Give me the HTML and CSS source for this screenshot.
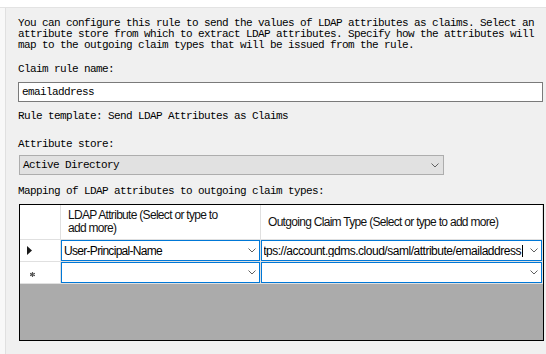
FILE: index.html
```html
<!DOCTYPE html>
<html>
<head>
<meta charset="utf-8">
<link rel="stylesheet" href="styles.css">
</head>
<body>
<div class="top"></div>
<div class="frame">
  <div class="side"></div>
  <div class="content">
    <p class="desc">You can configure this rule to send the values of LDAP attributes as claims. Select an<br>attribute store from which to extract LDAP attributes. Specify how the attributes will<br>map to the outgoing claim types that will be issued from the rule.</p>
    <p class="lbl lbl-name">Claim rule name:</p>
    <div class="textbox">emailaddress</div>
    <p class="lbl lbl-template">Rule template: Send LDAP Attributes as Claims</p>
    <p class="lbl lbl-store">Attribute store:</p>
    <div class="combo">
      <span>Active Directory</span>
      <svg class="chev" width="8" height="5" viewBox="0 0 8 5"><path d="M0.5 0.5 L4 4 L7.5 0.5" fill="none" stroke="#606060" stroke-width="1"/></svg>
    </div>
    <p class="lbl lbl-map">Mapping of LDAP attributes to outgoing claim types:</p>
    <div class="grid">
      <div class="row head">
        <div class="rh"></div>
        <div class="c1 hc">LDAP Attribute (Select or type to<br>add more)</div>
        <div class="c2 hc">Outgoing Claim Type (Select or type to add more)</div>
      </div>
      <div class="row data">
        <div class="rh"><svg width="5" height="9" viewBox="0 0 5 9"><path d="M0 0 L5 4.5 L0 9 Z" fill="#1a1a1a"/></svg></div>
        <div class="c1">
          <div class="cc">
            <span class="val">User-Principal-Name</span>
            <svg class="chev" width="8" height="5" viewBox="0 0 8 5"><path d="M0.5 0.5 L4 4 L7.5 0.5" fill="none" stroke="#606060" stroke-width="1"/></svg>
          </div>
        </div>
        <div class="c2">
          <div class="cc">
            <span class="clip"><span class="val edit">https://account.gdms.cloud/saml/attribute/emailaddress</span></span>
            <svg class="chev" width="8" height="5" viewBox="0 0 8 5"><path d="M0.5 0.5 L4 4 L7.5 0.5" fill="none" stroke="#606060" stroke-width="1"/></svg>
          </div>
        </div>
      </div>
      <div class="row data">
        <div class="rh newrow"><svg width="5" height="5" viewBox="0 0 5 5"><path d="M2.5 0 V5 M0 1.2 L5 3.8 M0 3.8 L5 1.2" fill="none" stroke="#555" stroke-width="1.2"/></svg></div>
        <div class="c1">
          <div class="cc">
            <span class="val"></span>
            <svg class="chev" width="8" height="5" viewBox="0 0 8 5"><path d="M0.5 0.5 L4 4 L7.5 0.5" fill="none" stroke="#606060" stroke-width="1"/></svg>
          </div>
        </div>
        <div class="c2">
          <div class="cc">
            <span class="val"></span>
            <svg class="chev" width="8" height="5" viewBox="0 0 8 5"><path d="M0.5 0.5 L4 4 L7.5 0.5" fill="none" stroke="#606060" stroke-width="1"/></svg>
          </div>
        </div>
      </div>
      <div class="empty"></div>
    </div>
  </div>
</div>
</body>
</html>
```
FILE: styles.css
```css
* { box-sizing: border-box; }
html, body { margin: 0; padding: 0; }
body {
  width: 546px;
  height: 354px;
  overflow: hidden;
  background: #f0f0f0;
  font-family: "Liberation Mono", monospace;
  font-size: 11px;
  letter-spacing: -0.6px;
  color: #000;
}
.top {
  height: 8px;
  background: #fff;
  border-bottom: 1px solid #e3e3e3;
}
.frame {
  display: flex;
  height: 346px;
}
.side {
  width: 6px;
  background: #f8f8f8;
  border-right: 1px solid #e0e0e0;
}
.content {
  flex: 1;
  padding: 10px 0 0 12px;
  display: flex;
  flex-direction: column;
  align-items: flex-start;
}
.desc, .lbl {
  margin: 0;
  line-height: 11px;
  white-space: nowrap;
}
.lbl-name { margin-top: 13px; }
.lbl-template { margin-top: 9px; }
.lbl-store { margin-top: 17px; }
.lbl-map { margin-top: 11px; }
.textbox {
  margin-top: 7px;
  width: 525px;
  height: 20px;
  border: 1px solid #7a7a7a;
  background: #fff;
  padding-left: 3px;
  line-height: 18px;
}
.combo {
  margin-top: 5px;
  margin-left: 1px;
  width: 425px;
  height: 20px;
  border: 1px solid #adadad;
  background: #e1e1e1;
  padding: 0 4px 0 3px;
  display: flex;
  align-items: center;
  justify-content: space-between;
}
.chev { display: block; flex: none; }
.grid {
  margin-top: 7px;
  margin-left: 1px;
  width: 525px;
  height: 137px;
  border: 1px solid #000;
  display: flex;
  flex-direction: column;
  font-family: "Liberation Sans", Arial, sans-serif;
  font-size: 12px;
  letter-spacing: -0.7px;
}
.row {
  display: flex;
  background: #fff;
}
.head { height: 35px; }
.data { height: 22px; }
.rh {
  width: 41px;
  border-right: 1px solid #e0e0e0;
  border-bottom: 1px solid #e0e0e0;
  display: flex;
  align-items: center;
  padding-left: 7px;
}
.rh svg { display: block; }
.newrow { padding-left: 10px; padding-top: 3px; }
.c1 {
  width: 200px;
  border-right: 1px solid #e0e0e0;
  border-bottom: 1px solid #e0e0e0;
}
.c2 {
  width: 282px;
  border-right: 1px solid #e0e0e0;
  border-bottom: 1px solid #e0e0e0;
}
.hc {
  display: flex;
  align-items: center;
  padding-left: 7px;
  line-height: 13px;
  color: #111;
}
.cc {
  height: 21px;
  border: 1px solid #0078d7;
  background: #fff;
  display: flex;
  align-items: center;
  justify-content: space-between;
  padding: 0 3px 0 2px;
  white-space: nowrap;
}
.clip {
  flex: 1;
  display: flex;
  justify-content: flex-end;
  overflow: hidden;
  margin-right: 7px;
}
.edit {
  flex: none;
  border-right: 1px solid #000;
  padding-right: 1px;
  line-height: 12px;
  letter-spacing: -0.48px;
}
.empty {
  flex: 1;
  background: #ababab;
}
```
